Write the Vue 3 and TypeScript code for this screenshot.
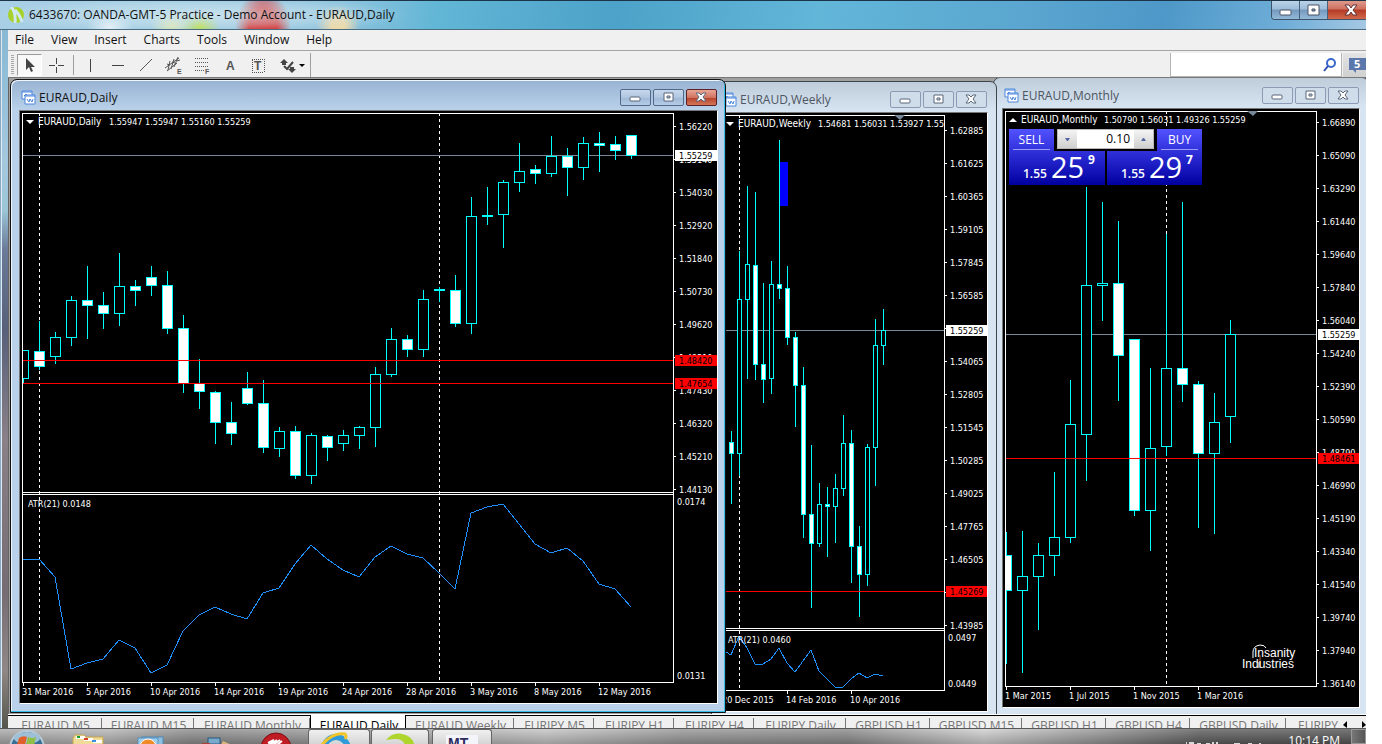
<script setup lang="ts">
import { ref } from 'vue'

type Candle = [x: number, high: number, top: number, bottom: number, low: number, filled: 0 | 1]
interface Mark { y: number; text: string }
interface Chart {
  id: string
  title: string
  nameX: number
  quote: string
  quoteX: number
  arrow: 'up' | 'down'
  view: { x: number; y: number; w: number; h: number }
  plot: { left: number; right: number; top: number; bottom: number }
  atr?: { top: number; bottom: number; label: string; labelX: number; max: string; min: string; points: string }
  bodyWidth: number
  axisStart: number
  axis: string[]
  dates: { x: number; text: string }[]
  separators: number[]
  price: Mark
  levels: Mark[]
  marker?: number
  zone?: { x: number; y: number; w: number; h: number }
  candles: Candle[]
}

const menus = ['File', 'View', 'Insert', 'Charts', 'Tools', 'Window', 'Help']
const tabs = [
  'EURAUD M5', 'EURAUD M15', 'EURAUD Monthly', 'EURAUD Daily', 'EURAUD Weekly', 'EURJPY M5', 'EURJPY H1',
  'EURJPY H4', 'EURJPY Daily', 'GBPUSD H1', 'GBPUSD M15', 'GBPUSD H1', 'GBPUSD H4', 'GBPUSD Daily', 'EURJPY',
]
const activeTab = ref(3)
const tool = ref('cursor')
const search = ref('')
const lots = ref('0.10')

const charts: Chart[] = [
  {
    id: 'monthly',
    title: 'EURAUD,Monthly',
    nameX: 1021,
    quote: '1.50790 1.56031 1.49326 1.55259',
    quoteX: 1104,
    arrow: 'up',
    view: { x: 1003, y: 109, w: 356, h: 598 },
    plot: { left: 1005, right: 1316, top: 111, bottom: 686 },
    bodyWidth: 11,
    axisStart: 122,
    axis: ['1.66890', '1.65090', '1.63290', '1.61440', '1.59640', '1.57840', '1.56040', '1.54240', '1.52390',
      '1.50590', '1.48790', '1.46990', '1.45190', '1.43340', '1.41540', '1.39740', '1.37940', '1.36140'],
    dates: [
      { x: 1006, text: '1 Mar 2015' }, { x: 1070, text: '1 Jul 2015' },
      { x: 1134, text: '1 Nov 2015' }, { x: 1198, text: '1 Mar 2016' },
    ],
    separators: [1166],
    price: { y: 334, text: '1.55259' },
    levels: [{ y: 458, text: '1.48461' }],
    marker: 1252,
    candles: [
      [1006, 532, 555, 591, 664, 1], [1022, 531, 576, 591, 673, 0], [1038, 543, 555, 577, 630, 0],
      [1054, 472, 537, 556, 576, 0], [1070, 380, 424, 538, 543, 0], [1086, 187, 285, 435, 481, 0],
      [1102, 202, 283, 286, 321, 0], [1118, 221, 283, 356, 401, 1], [1134, 339, 339, 511, 516, 1],
      [1150, 368, 448, 511, 551, 0], [1166, 234, 368, 447, 456, 0], [1182, 202, 368, 385, 402, 1],
      [1198, 381, 384, 454, 528, 1], [1214, 393, 422, 454, 534, 0], [1230, 320, 334, 417, 443, 0],
    ],
  },
  {
    id: 'weekly',
    title: 'EURAUD,Weekly',
    nameX: 738,
    quote: '1.54681 1.56031 1.53927 1.55259',
    quoteX: 818,
    arrow: 'down',
    view: { x: 721, y: 113, w: 266, h: 598 },
    plot: { left: 721, right: 944, top: 115, bottom: 628 },
    atr: {
      top: 630, bottom: 690, label: 'ATR(21) 0.0460', labelX: 728, max: '0.0497', min: '0.0449',
      points: '721,648 726,652 731,655 739,636 747,648 755,664 763,664 771,659 779,648 787,663 795,672 803,661 811,650 819,671 827,679 835,687 843,687 851,679 859,673 867,678 875,674 883,676',
    },
    bodyWidth: 5,
    axisStart: 130,
    axis: ['1.62885', '1.61625', '1.60365', '1.59105', '1.57845', '1.56585', '1.55325', '1.54065', '1.52805',
      '1.51545', '1.50285', '1.49025', '1.47765', '1.46505', '1.45245', '1.43985'],
    dates: [{ x: 723, text: '20 Dec 2015' }, { x: 787, text: '14 Feb 2016' }, { x: 851, text: '10 Apr 2016' }],
    separators: [739],
    price: { y: 330, text: '1.55259' },
    levels: [{ y: 591, text: '1.45269' }],
    marker: 899,
    zone: { x: 780, y: 162, w: 8, h: 44 },
    candles: [
      [731, 431, 442, 454, 504, 1], [739, 251, 299, 454, 476, 0], [747, 186, 264, 300, 379, 0],
      [755, 192, 265, 365, 380, 1], [763, 283, 364, 380, 403, 1], [771, 261, 284, 379, 394, 0],
      [779, 140, 284, 289, 299, 1], [787, 266, 288, 338, 345, 1], [795, 332, 337, 386, 427, 1],
      [803, 367, 385, 515, 538, 1], [811, 445, 514, 544, 608, 1], [819, 483, 504, 544, 547, 0],
      [827, 487, 504, 507, 557, 1], [835, 474, 488, 507, 543, 0], [843, 415, 443, 489, 496, 0],
      [851, 430, 443, 547, 583, 1], [859, 526, 546, 575, 617, 1], [867, 444, 447, 575, 586, 0],
      [875, 319, 345, 448, 486, 0], [883, 309, 330, 346, 365, 0],
    ],
  },
  {
    id: 'daily',
    title: 'EURAUD,Daily',
    nameX: 38,
    quote: '1.55947 1.55947 1.55160 1.55259',
    quoteX: 109,
    arrow: 'down',
    view: { x: 20, y: 111, w: 697, h: 592 },
    plot: { left: 22, right: 673, top: 113, bottom: 492 },
    atr: {
      top: 494, bottom: 682, label: 'ATR(21) 0.0148', labelX: 28, max: '0.0174', min: '0.0131',
      points: '23,559 39,559 55,577 71,669 87,663 103,659 119,640 135,648 151,673 167,665 183,631 199,615 215,607 231,614 247,619 263,593 279,588 295,564 311,545 327,559 343,570 359,577 375,557 391,546 407,554 423,558 439,573 455,589 471,513 487,507 503,504 519,524 535,544 551,553 567,548 583,561 599,584 615,589 631,607',
    },
    bodyWidth: 11,
    axisStart: 126,
    axis: ['1.56220', '1.55140', '1.54030', '1.52920', '1.51840', '1.50730', '1.49620', '1.48510', '1.47430',
      '1.46320', '1.45210', '1.44130'],
    dates: [
      { x: 23, text: '31 Mar 2016' }, { x: 87, text: '5 Apr 2016' }, { x: 151, text: '10 Apr 2016' },
      { x: 215, text: '14 Apr 2016' }, { x: 279, text: '19 Apr 2016' }, { x: 343, text: '24 Apr 2016' },
      { x: 407, text: '28 Apr 2016' }, { x: 471, text: '3 May 2016' }, { x: 535, text: '8 May 2016' },
      { x: 599, text: '12 May 2016' },
    ],
    separators: [39, 439],
    price: { y: 155, text: '1.55259' },
    levels: [{ y: 360, text: '1.48420' }, { y: 383, text: '1.47654' }],
    candles: [
      [23, 350, 350, 379, 383, 0], [39, 321, 351, 367, 370, 1], [55, 332, 337, 357, 364, 0],
      [71, 296, 300, 338, 346, 0], [87, 266, 300, 306, 339, 1], [103, 292, 305, 314, 329, 1],
      [119, 253, 286, 314, 326, 0], [135, 280, 286, 291, 306, 1], [151, 266, 277, 286, 296, 1],
      [167, 271, 285, 329, 334, 1], [183, 315, 328, 384, 393, 1], [199, 359, 383, 392, 409, 1],
      [215, 391, 392, 423, 444, 1], [231, 402, 422, 434, 445, 1], [247, 372, 388, 404, 405, 1],
      [263, 380, 403, 448, 453, 1], [279, 427, 431, 449, 457, 0], [295, 426, 431, 476, 479, 1],
      [311, 433, 435, 476, 484, 0], [327, 435, 436, 448, 461, 1], [343, 430, 435, 444, 451, 0],
      [359, 426, 427, 436, 449, 0], [375, 367, 374, 428, 447, 0], [391, 328, 339, 375, 377, 0],
      [407, 335, 339, 350, 357, 1], [423, 290, 299, 350, 357, 0], [439, 287, 289, 291, 302, 0],
      [455, 275, 290, 324, 327, 1], [471, 197, 216, 324, 334, 0], [487, 187, 215, 217, 225, 0],
      [503, 180, 182, 215, 248, 0], [519, 143, 171, 183, 192, 0], [535, 165, 169, 174, 184, 1],
      [551, 136, 156, 174, 177, 0], [567, 148, 156, 168, 196, 1], [583, 137, 143, 168, 180, 0],
      [599, 132, 143, 146, 172, 1], [615, 136, 144, 151, 160, 1], [631, 135, 135, 156, 159, 1],
    ],
  },
]

const half = (c: Chart) => (c.bodyWidth - 1) / 2
const floor = (c: Chart) => (c.atr ? c.atr.bottom : c.plot.bottom)
const viewBox = (c: Chart) => `${c.view.x} ${c.view.y} ${c.view.w} ${c.view.h}`
const tags = (c: Chart) => [
  ...c.levels.map((m) => ({ ...m, kind: 'level' })),
  { ...c.price, kind: 'price' },
]
const arrowPath = (c: Chart) => {
  const x = c.nameX - 12
  const y = c.plot.top
  return c.arrow === 'down' ? `M${x} ${y + 7}h8l-4 4z` : `M${x} ${y + 11}h8l-4 -4z`
}
</script>

<template>
  <div class="screen">
    <div class="app">
      <header class="titlebar">
        <svg class="logo" width="17" height="17" viewBox="0 0 17 17" aria-hidden="true">
          <circle cx="8" cy="8" r="8" fill="#a9d12c" />
          <path d="M3 0Q8 4 7 16M7 3Q12 8 14 15" stroke="#cfe8f2" stroke-width="3" fill="none" />
        </svg>
        <h1>6433670: OANDA-GMT-5 Practice - Demo Account - EURAUD,Daily</h1>
        <div class="app-buttons">
          <button type="button" aria-label="Minimize"><svg width="14" height="14"><rect x="1" y="7" width="11" height="5" rx="1" fill="#fff" stroke="#4c5566" /></svg></button>
          <button type="button" aria-label="Restore"><svg width="14" height="14"><path d="M1 2h11v10H1zM5 6v2h3v-2z" fill="#fff" fill-rule="evenodd" stroke="#4c5566" /></svg></button>
          <button type="button" class="close" aria-label="Close"><svg width="14" height="14"><path d="M1 2h4l2 3 2-3h4l-4 5 4 5H9L7 9l-2 3H1l4-5z" fill="#fff" stroke="#5c3338" /></svg></button>
        </div>
      </header>

      <div class="body">
        <nav class="menubar">
          <button v-for="m in menus" :key="m" type="button">{{ m }}</button>
        </nav>

        <div class="toolbar">
          <span class="grip"></span>
          <button type="button" class="tool" :class="{ pressed: tool === 'cursor' }" aria-label="Cursor" @click="tool = 'cursor'">
            <svg width="20" height="20"><path d="M6 3v12l3-3 2 5 2-1-2-4h4z" fill="#444" /></svg>
          </button>
          <button type="button" class="tool" aria-label="Crosshair" @click="tool = 'crosshair'">
            <svg width="20" height="20"><path d="M10 3h1v6h-1zM10 12h1v6h-1zM3 10h6v1H3zM12 10h6v1h-6z" fill="#444" /></svg>
          </button>
          <span class="rule"></span>
          <button type="button" class="tool" aria-label="Vertical line"><svg width="20" height="20"><path d="M10 4h1v13h-1z" fill="#444" /></svg></button>
          <button type="button" class="tool" aria-label="Horizontal line"><svg width="20" height="20"><path d="M4 10h12v1H4z" fill="#444" /></svg></button>
          <button type="button" class="tool" aria-label="Trendline"><svg width="20" height="20"><path d="M4 16L16 4" stroke="#555" /></svg></button>
          <button type="button" class="tool" aria-label="Equidistant channel">
            <svg width="20" height="20"><path d="M1 13L15 3M3 16L13 8M6 6L4 15M10 4L7 14M14 2l-4 10M3 9l3 1M8 7l3 1M13 6l3-1" stroke="#555" fill="none" /><text x="13" y="19" class="glyph-s">E</text></svg>
          </button>
          <button type="button" class="tool" aria-label="Fibonacci retracement">
            <svg width="20" height="20"><path d="M3 3h14M3 7h14M3 11h14M3 15h9" stroke="#555" stroke-dasharray="1 1" shape-rendering="crispEdges" /><text x="13" y="19" class="glyph-s">F</text></svg>
          </button>
          <button type="button" class="tool" aria-label="Text"><svg width="20" height="20"><text x="6" y="15" class="glyph">A</text></svg></button>
          <button type="button" class="tool" aria-label="Text label">
            <svg width="20" height="20"><rect x="4" y="4" width="12" height="13" fill="none" stroke="#555" stroke-dasharray="1 1" shape-rendering="crispEdges" /><text x="6" y="15" class="glyph">T</text></svg>
          </button>
          <button type="button" class="tool wide" aria-label="Arrows">
            <svg width="30" height="20"><path d="M2 8l4-4 4 4H8v2H4V8zM10 14h2v-2h4v2h2l-4 4z" fill="#444" /><path d="M6 11l3 3 6-7" fill="none" stroke="#444" stroke-width="2" /><path d="M21 9h6l-3 3z" fill="#000" /></svg>
          </button>
          <span class="rule end"></span>
          <label class="search">
            <input v-model="search" type="text" aria-label="Search" />
            <svg width="14" height="14" aria-hidden="true"><circle cx="8" cy="5" r="4" fill="#fff" stroke="#3a68cc" stroke-width="2" /><path d="M5 8L1 13" stroke="#2b4fb0" stroke-width="2" /></svg>
          </label>
          <button type="button" class="news" aria-label="5 notifications">
            <svg width="20" height="20"><path d="M1 3h17v12H8v3l-3-3H1z" fill="#5b77ab" /><text x="6" y="13" class="badge">5</text></svg>
          </button>
        </div>

        <main class="workspace">
          <section v-for="c in charts" :key="c.id" class="window" :class="c.id">
            <div class="window-title">
              <svg width="15" height="15" viewBox="0 0 15 15" aria-hidden="true">
                <path d="M1 1h10v8H1z" fill="#fff" stroke="#4a86dc" /><path d="M1 2h10" stroke="#4a86dc" /><path d="M3 6l2-2 1 2" stroke="#4a86dc" fill="none" />
                <path d="M4 5h10v9H4z" fill="#fff" stroke="#4a86dc" /><path d="M4 6h10" stroke="#4a86dc" /><path d="M6 9l2 3 1-3 2 3 1-3" stroke="#4a86dc" fill="none" />
              </svg>
              <h2>{{ c.title }}</h2>
              <button type="button" aria-label="Minimize"><svg width="13" height="11"><rect x="1" y="5" width="10" height="4" rx="1" fill="#fff" stroke="#5b6678" /></svg></button>
              <button type="button" aria-label="Restore"><svg width="13" height="11"><path d="M2 1h9v8H2zM5 4v2h3v-2z" fill="#fff" fill-rule="evenodd" stroke="#5b6678" /></svg></button>
              <button type="button" class="close" aria-label="Close"><svg width="13" height="11"><path d="M1 1h3l2 2 2-2h3L8 5l3 4H8L6 7 4 9H1l3-4z" fill="#fff" stroke="#5b6678" /></svg></button>
            </div>
            <div class="client">
              <svg class="chart" :viewBox="viewBox(c)" role="img" :aria-label="c.title">
                <defs>
                  <clipPath :id="`clip-${c.id}`">
                    <rect :x="c.plot.left + 1" :y="c.plot.top" :width="c.plot.right - c.plot.left - 1" :height="floor(c) - c.plot.top" />
                  </clipPath>
                </defs>
                <g class="frame">
                  <rect v-if="c.id !== 'weekly'" :x="c.plot.left" :y="c.plot.top" width="1" :height="floor(c) - c.plot.top + 1" />
                  <rect :x="c.plot.right" :y="c.plot.top" width="1" :height="floor(c) - c.plot.top + 1" />
                  <rect :x="c.plot.left" :y="c.plot.top" :width="c.plot.right - c.plot.left" height="1" />
                  <rect :x="c.plot.left" :y="c.plot.bottom" :width="c.plot.right - c.plot.left" height="1" />
                  <template v-if="c.atr">
                    <rect :x="c.plot.left" :y="c.atr.top" :width="c.plot.right - c.plot.left" height="1" />
                    <rect :x="c.plot.left" :y="c.atr.bottom" :width="c.plot.right - c.plot.left" height="1" />
                  </template>
                </g>
                <g :clip-path="`url(#clip-${c.id})`">
                  <line v-for="s in c.separators" :key="s" class="separator" :x1="s" :x2="s" :y1="c.plot.top" :y2="floor(c)" />
                  <rect class="price-line" :x="c.plot.left" :y="c.price.y" :width="c.plot.right - c.plot.left" height="1" />
                  <g v-for="k in c.candles" :key="k[0]">
                    <rect class="wick" :x="k[0]" :y="k[1]" width="1" :height="k[4] - k[1]" />
                    <rect class="wick" :x="k[0] - half(c)" :y="k[2]" :width="c.bodyWidth" :height="k[3] - k[2]" />
                    <rect v-if="k[3] - k[2] > 2" :class="k[5] ? 'bear' : 'bull'" :x="k[0] - half(c) + 1" :y="k[2] + 1" :width="c.bodyWidth - 2" :height="k[3] - k[2] - 2" />
                  </g>
                  <rect v-if="c.zone" :x="c.zone.x" :y="c.zone.y" :width="c.zone.w" :height="c.zone.h" fill="#00f" />
                  <rect v-for="l in c.levels" :key="l.y" class="level-line" :x="c.plot.left" :y="l.y" :width="c.plot.right - c.plot.left" height="1" />
                  <polyline v-if="c.atr" class="atr" :points="c.atr.points" />
                  <path v-if="c.marker" :d="`M${c.marker - 5} ${c.plot.top}h11l-5 5z`" fill="#778899" />
                  <path :d="arrowPath(c)" fill="#fff" />
                  <text class="name" :x="c.nameX" :y="c.plot.top + 12">{{ c.title }}</text>
                  <text :x="c.quoteX" :y="c.plot.top + 12">{{ c.quote }}</text>
                  <text v-if="c.atr" :x="c.atr.labelX" :y="c.atr.top + 13">{{ c.atr.label }}</text>
                </g>
                <g v-for="(a, i) in c.axis" :key="a">
                  <rect class="frame" :x="c.plot.right + 1" :y="c.axisStart + i * 33" width="2" height="1" />
                  <text :x="c.plot.right + 6" :y="c.axisStart + i * 33 + 4">{{ a }}</text>
                </g>
                <template v-if="c.atr">
                  <text :x="c.plot.right + 4" :y="c.atr.top + 11">{{ c.atr.max }}</text>
                  <text :x="c.plot.right + 4" :y="c.atr.bottom - 3">{{ c.atr.min }}</text>
                </template>
                <g v-for="t in tags(c)" :key="t.text" :class="['tag', t.kind]">
                  <rect :x="c.plot.right + 2" :y="t.y - 5" :width="c.view.x + c.view.w - c.plot.right - 2" height="11" />
                  <text :x="c.plot.right + 6" :y="t.y + 4">{{ t.text }}</text>
                </g>
                <g v-for="d in c.dates" :key="d.x">
                  <rect class="frame" :x="d.x" :y="floor(c) + 1" width="1" height="3" />
                  <text :x="d.x - 1" :y="floor(c) + 13">{{ d.text }}</text>
                </g>
                <g v-if="c.id === 'monthly'" class="expert">
                  <path d="M1253 658v-6q0-6 7-7q5 0 6 3M1259 662v6" fill="none" stroke="#fff" />
                  <path d="M1260 655v10" stroke="#b0603a" />
                  <text x="1254" y="657">Insanity</text>
                  <text x="1242" y="668">Industries</text>
                </g>
              </svg>
              <div v-if="c.id === 'monthly'" class="trade">
                <button type="button" class="side sell">
                  <span class="side-name">SELL</span>
                  <span class="quote"><b>1.55</b><span class="big">25</span><sup>9</sup></span>
                </button>
                <button type="button" class="side buy">
                  <span class="side-name">BUY</span>
                  <span class="quote"><b>1.55</b><span class="big">29</span><sup>7</sup></span>
                </button>
                <div class="lots">
                  <button type="button" aria-label="Less volume"><svg width="5" height="3"><path d="M0 0h5L3 3H2z" fill="#5566a0" /></svg></button>
                  <input v-model="lots" type="text" aria-label="Volume" />
                  <button type="button" aria-label="More volume"><svg width="5" height="3"><path d="M0 3h5L3 0H2z" fill="#5566a0" /></svg></button>
                </div>
              </div>
            </div>
          </section>
        </main>

        <div class="tabs">
          <button v-for="(t, i) in tabs" :key="i" type="button" :class="{ active: i === activeTab }" @click="activeTab = i">{{ t }}</button>
          <span class="tab-scroll">
            <button type="button" aria-label="Scroll left"><svg width="5" height="8"><path d="M4 0v7L0 4z" /></svg></button>
            <button type="button" aria-label="Scroll right"><svg width="5" height="8"><path d="M1 0v7l4-3z" /></svg></button>
          </span>
        </div>
      </div>

      <footer class="taskbar">
        <button type="button" class="task start" aria-label="Start">
          <svg width="38" height="16"><circle cx="19" cy="19" r="17" fill="#386f96" stroke="#b7cbd8" stroke-width="2" /><ellipse cx="19" cy="9" rx="13" ry="6" fill="#9ec0d6" /><path d="M11 9q4-3 8-1l-2 8H9z" fill="#e2602c" /><path d="M20 8q4 2 8 0l-2 8h-8z" fill="#8fc045" /></svg>
        </button>
        <button type="button" class="task folder" aria-label="Explorer">
          <svg width="34" height="16"><path d="M1 9l2-3h9l2 2h17v9H1z" fill="#f0dc98" stroke="#c7a850" /><rect x="4" y="7" width="9" height="3" fill="#fff" /><rect x="5" y="7" width="3" height="2" fill="#16a034" /><rect x="12" y="9" width="9" height="3" fill="#fff" /><rect x="12" y="9" width="4" height="2" fill="#d64028" /><rect x="21" y="11" width="9" height="3" fill="#fff" /><rect x="20" y="11" width="4" height="2" fill="#3a8ee0" /></svg>
        </button>
        <button type="button" class="task media" aria-label="Media Player">
          <svg width="28" height="16"><rect x="5" y="8" width="21" height="12" fill="#8fc0e0" stroke="#4c8ab8" /><rect x="1" y="9" width="20" height="12" fill="#9ed0ee" stroke="#5690bb" /><circle cx="11" cy="18" r="8" fill="#ef8b28" stroke="#fff" /></svg>
        </button>
        <button type="button" class="task network" aria-label="Connections">
          <svg width="34" height="16"><rect x="9" y="9" width="12" height="6" fill="#79a9cd" stroke="#2a587d" /><rect x="3" y="14" width="8" height="4" fill="#a9413a" /><path d="M14 15v3" stroke="#1f4d70" stroke-width="3" /><path d="M24 12l9 4H22z" fill="#d8b57c" /></svg>
        </button>
        <button type="button" class="task hand" aria-label="Stop">
          <svg width="30" height="16"><circle cx="15" cy="19" r="15" fill="#bf1c24" stroke="#7d1016" /><path d="M7 14l6-3M8 16l8-5M12 16l7-5M16 16l5-4" stroke="#fff" stroke-width="2" /></svg>
        </button>
        <button type="button" class="task boxed ie" aria-label="Internet Explorer">
          <svg width="34" height="16"><circle cx="18" cy="19" r="12" fill="none" stroke="#2f9bd8" stroke-width="6" /><path d="M3 16Q14 2 27 4q2 2 0 5" fill="none" stroke="#f0c52c" stroke-width="3" /></svg>
        </button>
        <button type="button" class="task boxed oanda" aria-label="OANDA">
          <svg width="34" height="16"><path d="M3 10Q10 2 19 4q12 2 13 14h-9q-2-10-12-9z" fill="#aed52c" /></svg>
        </button>
        <button type="button" class="task boxed mt" aria-label="MetaTrader">
          <svg width="32" height="16"><rect x="0" y="5" width="32" height="14" fill="#f4f5fa" /><text x="2" y="18">MT</text></svg>
        </button>
        <svg class="tray" width="80" height="16" aria-hidden="true"><path d="M4 14h1M7 14h5M15 15h4M24 15h4M31 13v3M35 13v3M52 15h6M66 15h4M78 14v2" stroke="#d9d9d9" stroke-width="2" /></svg>
        <time>10:14 PM</time>
        <span class="show-desktop"></span>
      </footer>
    </div>
  </div>
</template>

<style>
body { background: #fff; overflow: hidden; }
</style>

<style scoped>
* { box-sizing: border-box; }
h1, h2 { margin: 0; font-weight: 400; white-space: nowrap; }
button { margin: 0; padding: 0; border: 0; background: none; font: inherit; color: inherit; }
svg { display: block; flex: none; }
.screen {
  height: 100vh;
  padding-right: 16px;
  background: #fff;
  font: 12px/16px "Open Sans", "Noto Sans", sans-serif;
  color: #111;
}
.app {
  display: flex;
  flex-direction: column;
  height: 100%;
  overflow: hidden;
  background: #8aa9c4;
}
.titlebar {
  display: flex;
  flex: none;
  height: 30px;
  padding-left: 8px;
  border-top: 1px solid #1c3348;
  border-bottom: 1px solid #4a6c80;
  background:
    radial-gradient(ellipse 210px 18px at 200px 14px, #d5e8f0cc, #d5e8f066 60%, transparent),
    radial-gradient(ellipse 24px 16px at 110px 26px, #e8f2f8, transparent),
    radial-gradient(ellipse 22px 14px at 172px 24px, #dfe8a8, transparent),
    radial-gradient(ellipse 20px 14px at 200px 25px, #b5da20, transparent),
    radial-gradient(ellipse 28px 32px at 263px 24px, #d42424 50%, transparent),
    radial-gradient(ellipse 22px 20px at 338px 24px, #ecd9a8 30%, transparent),
    linear-gradient(100deg, #a8cfe5 0, #8fc4de 25%, #62b6d6 32%, #4ca2c8 45%, #62b6d8 60%, #5aa6d0 75%, #4d98c8 85%, #6faed8 94%, #a6c8e4 100%);
}
.logo { margin-top: 6px; }
.titlebar h1 { flex: 1; margin-left: 4px; padding-top: 6px; font-size: 12px; line-height: 16px; }
.app-buttons { display: flex; height: 19px; border: 1px solid #3d5468; border-top: 0; border-right: 0; border-radius: 0 0 0 4px; overflow: hidden; }
.app-buttons button {
  display: flex; align-items: center; justify-content: center;
  width: 28px; height: 18px;
  border-right: 1px solid #47627a;
  background: linear-gradient(#b9d3e8, #9dbcd8 45%, #7599bd 50%, #93b9da);
}
.app-buttons .close { width: 38px; padding-left: 8px; border: 0; background: linear-gradient(#dd9a8c, #cf6f5e 45%, #b33a26 50%, #d2694b); }
.body {
  display: flex;
  flex: 1;
  flex-direction: column;
  min-height: 0;
  margin-left: 1px;
  border-left: 1px solid #dfe9f0;
  padding-left: 6px;
  background: linear-gradient(#88b8d4 0, #a4c8de 130px, #9cc6d8 180px, #6a7a98 220px, #58607a 300px, #8a8088 410px, #756c74 560px, #908886 640px, #54544a 700px);
}
.menubar { display: flex; flex: none; height: 21px; padding-left: 7px; border-bottom: 1px solid #a5a5a5; background: #f0f0f0; gap: 17px; }
.menubar button { line-height: 20px; }
.toolbar {
  display: flex;
  flex: none;
  align-items: center;
  height: 27px;
  padding: 2px 0 0 3px;
  border-bottom: 1px solid #777;
  background: #f0f0f0;
}
.grip { width: 3px; height: 20px; margin-right: 3px; background: repeating-linear-gradient(#a8a8a8 0 1px, #f0f0f0 1px 2px); }
.tool { display: flex; align-items: center; justify-content: center; width: 28px; height: 22px; }
.tool.pressed { width: 25px; border: 1px solid #9c9c9c; border-right-color: #fff; border-bottom-color: #fff; background: #f9f9f9; }
.tool.wide { width: 36px; justify-content: flex-end; }
.rule { width: 1px; height: 20px; margin: 0 2px 0 3px; background: #a0a0a0; }
.rule.end { height: 24px; margin-left: 2px; }
.glyph { font: bold 12px "Liberation Sans", sans-serif; fill: #555; }
.glyph-s { font: bold 7px "Liberation Sans", sans-serif; fill: #555; }
.badge { font: bold 11px "Open Sans", sans-serif; fill: #fff; }
.search {
  display: flex; align-items: center; align-self: flex-start;
  width: 172px; height: 24px;
  margin-left: auto; padding: 0 4px;
  border: 1px solid #b4b4b4; border-top: 0;
  background: #fff;
}
.search input { flex: 1; min-width: 0; border: 0; outline: 0; background: none; font: inherit; }
.news { display: flex; align-items: center; width: 23px; height: 24px; margin-left: 1px; padding-left: 5px; background: linear-gradient(#e4e4e4, #d0d0d0); overflow: hidden; }

.workspace {
  position: relative;
  flex: 1;
  min-height: 0;
  overflow: hidden;
  border-left: 1px solid #666;
  background: #a0a0a0;
}
.window {
  position: absolute;
  border: 1px solid #3c444c;
  border-radius: 7px 7px 0 0;
  padding: 0 8px 8px;
  background: linear-gradient(#bfcddb 0, #d7e4f2 30px);
  color: #4d5661;
}
.window.monthly { left: 984px; top: -1px; width: 376px; }
.window.weekly { left: 702px; top: 3px; width: 286px; }
.window.daily {
  left: 1px; top: 1px; width: 716px;
  padding-right: 7px;
  border-color: #111;
  background: linear-gradient(#98b3d2 0, #b9d1ea 30px);
  box-shadow: inset -1px -1px #35bfe8, inset 1px 1px #eef5fb;
  color: #111;
}
.window-title { display: flex; align-items: center; height: 30px; padding: 5px 1px 0 2px; }
.window-title h2 { flex: 1; margin-left: 3px; font-size: 12px; line-height: 16px; }
.window-title button {
  display: flex; align-items: center; justify-content: center;
  width: 31px; height: 17px; margin-left: 2px;
  border: 1px solid #8c9bb5; border-radius: 2px;
  background: #cfdcea;
}
.daily .window-title button { border-color: #53698a; background: linear-gradient(#c6d8ec, #b0c6e0 50%, #9fb8d6 50%, #b4cce6); }
.daily .window-title .close { border-color: #5a2228; background: linear-gradient(#e8a695, #d17361 50%, #b43e28 50%, #d4775a); }
.client { position: relative; border: 1px solid #fff; border-top-color: #777; border-left-color: #777; background: #000; overflow: hidden; }
.chart { width: 100%; background: #000; }
.chart text { font: 9px "DejaVu Sans Condensed", "DejaVu Sans", sans-serif; fill: #fff; }
.chart .name { font-size: 10px; }
.frame { fill: #fff; }
.separator { stroke: #fff; stroke-width: 1; stroke-dasharray: 3 3; shape-rendering: crispEdges; }
.price-line { fill: #778899; }
.level-line { fill: #f00; }
.wick { fill: #0ff; }
.bull { fill: #000; }
.bear { fill: #fff; }
.atr { fill: none; stroke: #1e90ff; shape-rendering: crispEdges; }
.tag.price rect { fill: #fff; }
.tag.level rect { fill: #f00; }
.chart .tag text { fill: #000; }
.chart .expert text { font: 12px/1 "Liberation Sans", sans-serif; }

.trade { position: absolute; left: 6px; top: 20px; display: grid; grid-template-columns: 96px 95px; gap: 2px; color: #fff; }
.side { display: flex; flex-direction: column; height: 56px; background: linear-gradient(#5252ff, #2020c8 60%, #0000a0); }
.sell { align-items: flex-start; clip-path: polygon(0 0, 45px 0, 45px 22px, 100% 22px, 100% 100%, 0 100%); }
.buy { align-items: flex-end; clip-path: polygon(50px 0, 100% 0, 100% 100%, 0 100%, 0 22px, 50px 22px); }
.side-name { width: 37px; height: 21px; margin: 0 4px; border-bottom: 1px solid #9c9cf4; font-size: 12px; line-height: 21px; text-align: center; }
.quote { display: flex; width: 95px; height: 34px; padding-left: 14px; align-items: flex-end; }
.quote b { font-weight: 600; font-size: 12px; line-height: 20px; }
.big { margin-left: 4px; font-size: 29px; line-height: 34px; }
.quote sup { margin-left: 4px; align-self: flex-start; font-weight: bold; font-size: 12px; line-height: 20px; }
.lots { position: absolute; left: 48px; top: 0; display: flex; width: 97px; height: 20px; border: 1px solid #b8b8b8; background: #fff; }
.lots button { display: flex; align-items: center; justify-content: center; width: 19px; background: linear-gradient(#f4f4f4, #cfcfcf); }
.lots input { flex: 1; min-width: 0; padding: 0 4px; border: 0; font: inherit; text-align: right; }

.tabs {
  display: grid;
  grid-template-columns: 94px 92px 116px 96px 108px 80px 80px 80px 92px 84px 92px 84px 84px 96px 1fr 30px;
  align-items: start;
  flex: none;
  height: 14px;
  border-top: 1px solid #fff;
  background: #f0f0f0;
  box-shadow: inset 0 1px #000;
  color: #777;
  overflow: hidden;
}
.tabs > button { height: 16px; margin-top: 3px; padding-left: 2px; border-right: 1px solid #777; line-height: 16px; text-align: center; white-space: nowrap; }
.tabs > button.active { height: 19px; margin-top: 0; padding-top: 3px; border: 1px solid #000; border-top: 0; background: #fff; color: #000; }
.tabs > button:nth-of-type(15) { padding-left: 12px; border: 0; text-align: left; }
.tab-scroll { display: flex; align-items: flex-start; justify-content: space-between; padding: 6px 2px 0 5px; }
.taskbar {
  display: flex;
  flex: none;
  height: 16px;
  border-top: 1px solid #55585a;
  overflow: hidden;
  background:
    linear-gradient(#fff3, #0003),
    linear-gradient(90deg, #a9a9a9, #b5b5b5 8%, #8c8c8c 14%, #a4a4a4 30%, #c4c4c4 40%, #979797 50%, #8a8a8a 62%, #cfcfcf 72%, #989898 80%, #5c5c5c 88%, #555 100%);
}
.task { display: flex; justify-content: center; height: 30px; }
.start { margin-left: 8px; }
.folder { margin-left: 26px; }
.media { margin-left: 31px; }
.network { margin-left: 34px; }
.hand { margin-left: 28px; }
.boxed { width: 60px; border: 1px solid #666; border-bottom: 0; border-radius: 3px 3px 0 0; background: linear-gradient(#f0f0f0, #b8b8b8); }
.ie { width: 62px; margin-left: 17px; padding-right: 8px; }
.oanda { margin-left: 1px; width: 58px; }
.mt { margin-left: 3px; }
.mt text { font: bold 14px "Liberation Sans", sans-serif; fill: #2c2c60; }
.tray { margin-left: auto; }
.taskbar time { margin: 4px 11px 0 26px; color: #fff; }
.show-desktop { width: 15px; border: 1px solid #999; background: linear-gradient(90deg, #777, #555); }
</style>
